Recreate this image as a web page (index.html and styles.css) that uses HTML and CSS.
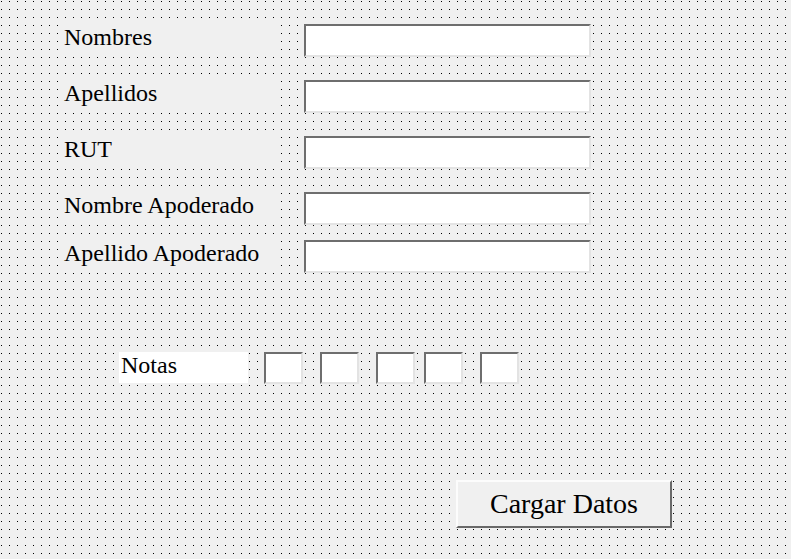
FILE: index.html
```html
<!DOCTYPE html>
<html>
<head>
<meta charset="utf-8">
<link rel="stylesheet" href="styles.css">
</head>
<body>
<div class="form">
  <div class="row r1">
    <div class="lbl">Nombres</div>
    <div class="txt"></div>
  </div>
  <div class="row r2">
    <div class="lbl">Apellidos</div>
    <div class="txt"></div>
  </div>
  <div class="row r2">
    <div class="lbl">RUT</div>
    <div class="txt"></div>
  </div>
  <div class="row r2">
    <div class="lbl">Nombre Apoderado</div>
    <div class="txt"></div>
  </div>
  <div class="row r3">
    <div class="lbl">Apellido Apoderado</div>
    <div class="txt"></div>
  </div>
  <div class="notas">
    <div class="nlbl">Notas</div>
    <div class="nbox"></div>
    <div class="nbox"></div>
    <div class="nbox"></div>
    <div class="nbox near"></div>
    <div class="nbox"></div>
  </div>
  <div class="btnrow">
    <div class="btn">Cargar Datos</div>
  </div>
</div>
</body>
</html>
```
FILE: styles.css
```css
html, body {
  margin: 0;
  padding: 0;
}
body {
  width: 791px;
  height: 559px;
  overflow: hidden;
  background-color: #000;
  background-image:
    linear-gradient(90deg, transparent 1px, #f0f0f0 1px),
    linear-gradient(180deg, transparent 1px, #f0f0f0 1px);
  background-size: 8px 8px;
  background-position: 1px 1px;
  font-family: "Liberation Serif", "Times New Roman", serif;
  color: #000;
}
.form {
  display: flex;
  flex-direction: column;
  padding-top: 24px;
}
.row {
  display: flex;
  align-items: flex-start;
  height: 33px;
}
.r2 { margin-top: 23px; }
.r3 { margin-top: 15px; }
.lbl {
  margin-left: 60px;
  width: 216px;
  height: 32px;
  padding-left: 4px;
  background: #f0f0f0;
  font-size: 24px;
  line-height: 27px;
  white-space: nowrap;
}
.txt {
  margin-left: 24px;
  width: 283px;
  height: 29px;
  background: #fff;
  border-style: solid;
  border-width: 2px;
  border-color: #6e6e6e #e3e3e3 #e3e3e3 #6e6e6e;
}
.notas {
  display: flex;
  align-items: flex-start;
  margin-top: 79px;
  height: 32px;
}
.nlbl {
  margin-left: 119px;
  width: 127px;
  height: 31px;
  padding-left: 2px;
  background: #fff;
  font-size: 24px;
  line-height: 27px;
}
.nbox {
  margin-left: 17px;
  width: 35px;
  height: 28px;
  background: #fff;
  border-style: solid;
  border-width: 2px;
  border-color: #6e6e6e #e3e3e3 #e3e3e3 #6e6e6e;
}
.nlbl + .nbox { margin-left: 16px; }
.nbox.near { margin-left: 9px; }
.btnrow {
  display: flex;
  margin-top: 96px;
}
.btn {
  margin-left: 456px;
  width: 212px;
  height: 44px;
  background: #f0f0f0;
  border-style: solid;
  border-width: 2px;
  border-color: #fcfcfc #696969 #696969 #fcfcfc;
  display: flex;
  align-items: center;
  justify-content: center;
  font-size: 28px;
  line-height: 32px;
}
```
